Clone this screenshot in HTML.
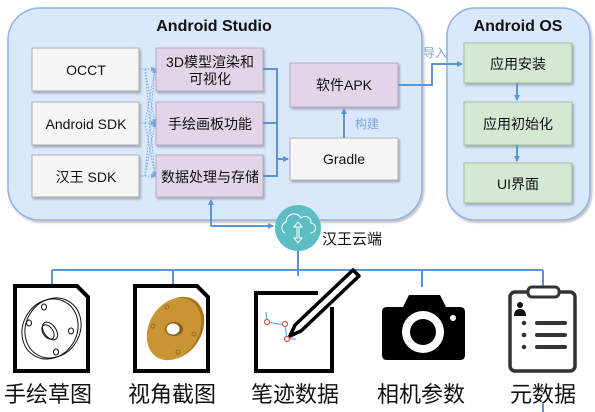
<!DOCTYPE html>
<html><head><meta charset="utf-8"><style>
html,body{margin:0;padding:0;background:#fff;width:595px;height:412px;overflow:hidden}
svg{display:block}
.t{font-family:"Liberation Sans","Noto Sans CJK SC",sans-serif;}
</style></head><body>
<svg width="595" height="412" viewBox="0 0 595 412" xmlns="http://www.w3.org/2000/svg">
<defs>
<filter id="sh" x="-10%" y="-10%" width="130%" height="140%"><feDropShadow dx="1.5" dy="2" stdDeviation="1" flood-color="#000" flood-opacity="0.25"/></filter>
<marker id="ar" markerWidth="6" markerHeight="6" refX="5" refY="3" orient="auto" markerUnits="userSpaceOnUse"><path d="M0,0 L6,3 L0,6 Z" fill="#5b95d5"/></marker>
<marker id="ad" markerWidth="5" markerHeight="5" refX="4" refY="2.5" orient="auto" markerUnits="userSpaceOnUse"><path d="M0,0 L5,2.5 L0,5 Z" fill="#7aa7dc"/></marker>
</defs>
<rect x="8" y="8" width="414" height="212" rx="32" fill="#dae8fc" stroke="#8fb2e0" stroke-width="1.5" filter="url(#sh)"/>
<rect x="447" y="8" width="143" height="212" rx="28" fill="#dae8fc" stroke="#8fb2e0" stroke-width="1.5" filter="url(#sh)"/>
<g class="t" font-weight="bold" font-size="16" fill="#111" text-anchor="middle">
<text x="214" y="31">Android Studio</text>
<text x="518" y="31">Android OS</text>
</g>
<g fill="#f5f5f5" stroke="#b0b0b0" filter="url(#sh)">
<rect x="32" y="48" width="107" height="43"/>
<rect x="32" y="102" width="107" height="43"/>
<rect x="32" y="155" width="107" height="42"/>
<rect x="290" y="138" width="108" height="42"/>
</g>
<g fill="#e1d5e7" stroke="#b9a7c8" filter="url(#sh)">
<rect x="156" y="48" width="107" height="43"/>
<rect x="156" y="102" width="107" height="43"/>
<rect x="156" y="155" width="107" height="42"/>
<rect x="290" y="63" width="108" height="44"/>
</g>
<g fill="#d5e8d4" stroke="#9fc09a" filter="url(#sh)">
<rect x="464" y="43" width="108" height="40"/>
<rect x="464" y="102" width="108" height="43"/>
<rect x="464" y="163" width="108" height="40"/>
</g>
<g class="t" font-size="14" fill="#111" text-anchor="middle">
<text x="86" y="75">OCCT</text>
<text x="86" y="129">Android SDK</text>
<text x="86" y="182">汉王 SDK</text>
<text x="210" y="67">3D模型渲染和</text>
<text x="210" y="84">可视化</text>
<text x="210" y="129">手绘画板功能</text>
<text x="210" y="182">数据处理与存储</text>
<text x="344" y="90">软件APK</text>
<text x="344" y="164">Gradle</text>
<text x="518" y="69">应用安装</text>
<text x="518" y="129">应用初始化</text>
<text x="518" y="189">UI界面</text>
</g>
<g stroke="#7aa7dc" stroke-width="1" stroke-dasharray="1.5,1.5" fill="none" marker-end="url(#ad)">
<path d="M139,69 H155"/>
<path d="M139,123 H155"/>
<path d="M139,176 H155"/>
<path d="M145,69 L155,123"/>
<path d="M145,69 L155,176"/>
<path d="M145,123 L155,176"/>
<path d="M145,176 L155,69"/>
<path d="M145,176 L155,123"/>
<path d="M145,123 L155,69"/>
</g>
<g stroke="#5b95d5" stroke-width="2" fill="none">
<path d="M263,69 H277 V176 H263"/>
<path d="M263,123 H277"/>
<path d="M277,159 H288" marker-end="url(#ar)"/>
<path d="M344,138 V109" marker-end="url(#ar)"/>
<path d="M398,85 H432 V64 H462" marker-end="url(#ar)"/>
<path d="M517,83 V100" marker-end="url(#ar)"/>
<path d="M517,145 V161" marker-end="url(#ar)"/>
<path d="M211,226 V200" marker-end="url(#ar)"/>
<path d="M211,226 H273" marker-end="url(#ar)"/>
<path d="M298,250 V270 M52,270 H543 M52,270 V285 M173,270 V285 M298,270 V276 M422,270 V287 M543,270 V287"/>
<path d="M543,404 V412"/>
</g>
<g class="t" font-size="12" fill="#7fa6d4">
<text x="423" y="57">导入</text>
<text x="355" y="128">构建</text>
</g>
<circle cx="298" cy="228" r="23" fill="#5cbec4"/>
<path d="M285,233 a6,6 0 0 1 1,-11 a8,8 0 0 1 15,-4 a6,6 0 0 1 10,5 a5,5 0 0 1 -1,10" fill="none" stroke="#fff" stroke-width="1"/>
<path d="M298,222 L294,227 H297 V238 H294 L298,243 L302,238 H299 V227 H302 Z" fill="none" stroke="#fff" stroke-width="1"/>
<text class="t" x="322" y="244" font-size="15" fill="#111">汉王云端</text>
<!-- doc1 -->
<path d="M15,286 H77 L88,297 V371 H15 Z" fill="#fff" stroke="#000" stroke-width="4"/>
<g fill="none" stroke="#111" stroke-width="1">
<ellipse cx="50" cy="329" rx="27" ry="31" transform="rotate(30 50 329)"/>
<ellipse cx="53" cy="328" rx="27" ry="31" transform="rotate(30 53 328)"/>
<ellipse cx="50" cy="331" rx="6" ry="10" transform="rotate(-35 50 331)"/>
<ellipse cx="48" cy="332" rx="5" ry="8" transform="rotate(-35 48 332)"/>
<ellipse cx="44" cy="307" rx="2.5" ry="3"/>
<ellipse cx="29" cy="323" rx="2.5" ry="3"/>
<ellipse cx="71" cy="331" rx="2.5" ry="3"/>
<ellipse cx="56" cy="352" rx="2.5" ry="3"/>
</g>
<!-- doc2 -->
<path d="M135,286 H197 L208,297 V371 H135 Z" fill="#fff" stroke="#000" stroke-width="4"/>
<ellipse cx="177" cy="328" rx="25" ry="33" transform="rotate(30 177 328)" fill="#a67420"/>
<ellipse cx="174" cy="329" rx="25" ry="33" transform="rotate(30 174 329)" fill="#c99434"/>
<ellipse cx="174" cy="329" rx="9" ry="7" fill="#8a6118"/>
<ellipse cx="173" cy="329" rx="6.5" ry="5.5" fill="#fff"/>
<g fill="none" stroke="#8a6118" stroke-width="0.8"><circle cx="167" cy="307" r="2"/><circle cx="153" cy="326" r="2"/><circle cx="194" cy="334" r="2"/><circle cx="178" cy="352" r="2"/></g>
<!-- pen doc -->
<path d="M318,293 H256 V371 H332 V307" fill="none" stroke="#000" stroke-width="4"/>
<path d="M353,270 L359,276 L301,331 L290,336 L295,325 Z" fill="#fff" stroke="#000" stroke-width="3.5" stroke-linejoin="round"/>
<path d="M292,334 L289,337" stroke="#000" stroke-width="3"/>
<path d="M266,312 L267,322 L285,325 L287,339 L296,339" fill="none" stroke="#5ab5e0" stroke-width="1.2"/>
<g fill="#fff" stroke="#d9534f" stroke-width="1.2"><circle cx="267" cy="322" r="2.5"/><circle cx="285" cy="324" r="2.5"/><circle cx="287" cy="339" r="2.5"/></g>
<!-- camera -->
<path d="M387,307 H403 L409,295 H440 L446,307 H460 Q465,307 465,312 V355 Q465,360 460,360 H387 Q382,360 382,355 V312 Q382,307 387,307 Z" fill="#000"/>
<circle cx="423" cy="332" r="21" fill="#fff"/>
<circle cx="423" cy="332" r="13" fill="#000"/>
<circle cx="453" cy="318" r="3" fill="#fff"/>
<!-- clipboard -->
<rect x="510" y="292" width="65" height="79" rx="5" fill="#fff" stroke="#333" stroke-width="3.5"/>
<rect x="528" y="287" width="31" height="10" rx="4" fill="#fff" stroke="#333" stroke-width="3"/>
<circle cx="520" cy="305" r="3" fill="#111"/><path d="M514,316 Q514,309 520,309 Q526,309 526,316 Z" fill="#111"/>
<g fill="#333"><circle cx="524" cy="323" r="2.3"/><circle cx="524" cy="335" r="2.3"/><circle cx="524" cy="347" r="2.3"/></g>
<g stroke="#333" stroke-width="4" stroke-linecap="round"><path d="M537,323 H565 M537,335 H565 M537,347 H565"/></g>
<g class="t" font-size="22" fill="#111">
<text x="4" y="402">手绘草图</text>
<text x="128" y="402">视角截图</text>
<text x="251" y="402">笔迹数据</text>
<text x="377" y="402">相机参数</text>
<text x="510" y="402">元数据</text>
</g>
</svg>
</body></html>
